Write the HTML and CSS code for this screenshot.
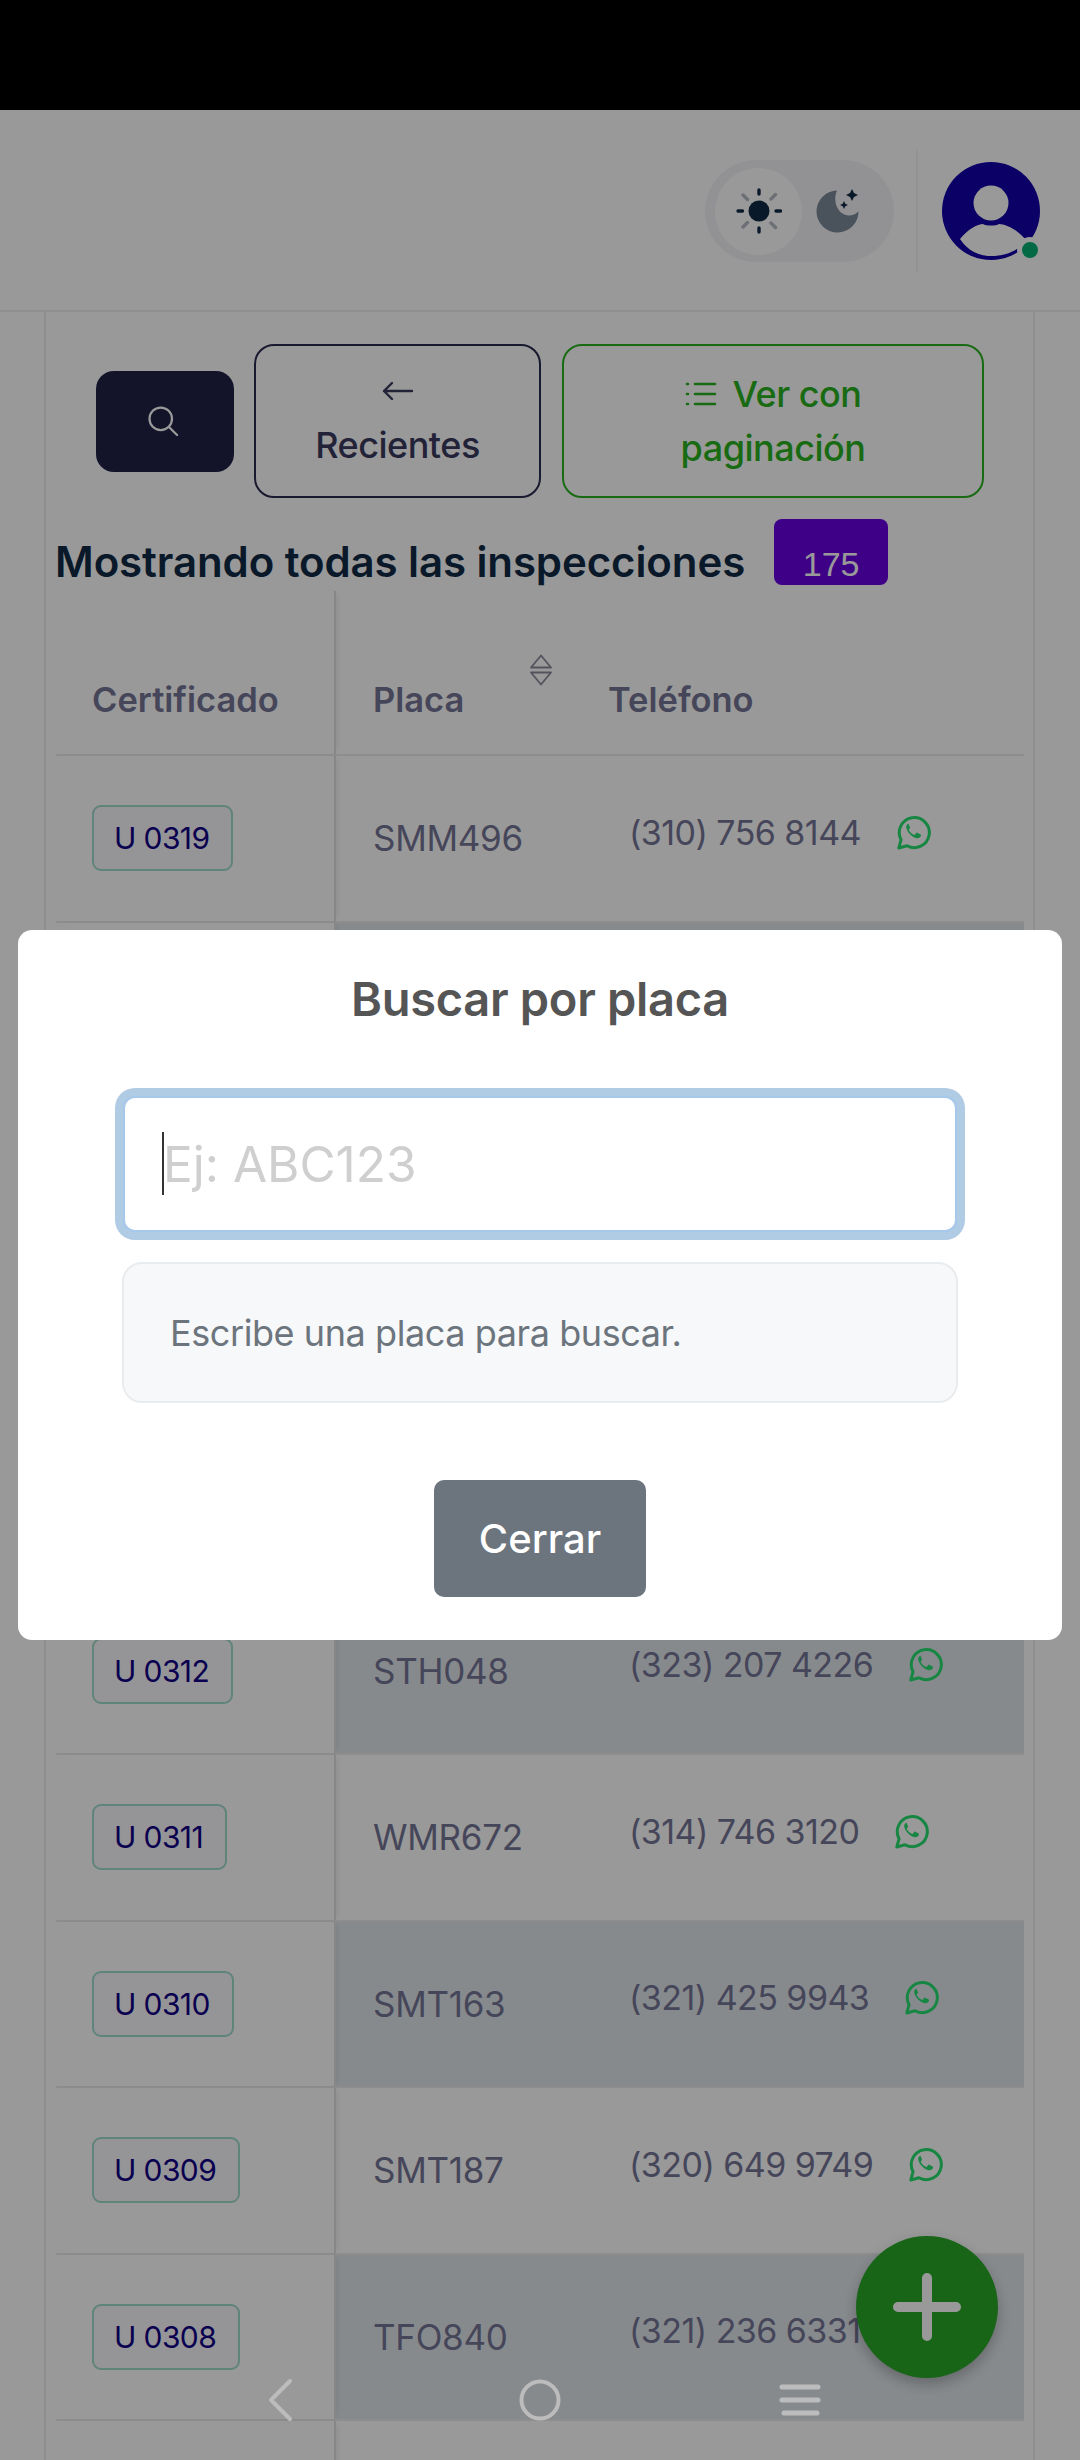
FILE: index.html
```html
<!DOCTYPE html>
<html lang="es">
<head>
<meta charset="utf-8">
<title>Inspecciones</title>
<link rel="stylesheet" href="styles.css">
</head>
<body>
<div class="page">
  <div class="statusbar"></div>
  <header class="topbar">
    <div class="toggle">
      <span class="knob">
        <svg class="sun" viewBox="0 0 46 46" width="46" height="46">
          <circle cx="23" cy="23" r="10.5" fill="#122b46"/>
          <g stroke="#122b46" stroke-width="3.4" stroke-linecap="round">
            <path d="M23 2v4M23 40v4M2 23h4.500M40 23h4.500"/>
          </g>
          <g stroke="#b4bac2" stroke-width="3.4" stroke-linecap="round">
            <path d="M7 7l4.500 4.500M35 35l4.500 4.500M7 39l4.500-4.500M35 11l4.500-4.500"/>
          </g>
        </svg>
      </span>
      <svg class="moon" viewBox="0 0 46 46" width="46" height="46">
        <path d="M22 2.500A21 21 0 1 0 43.500 23.500C38 29 31 28.500 26 24.500 20.500 19.500 18.500 10.500 22 2.500z" fill="#7c8999"/>
        <path d="M37 1l2 4 4 2-4 2-2 4-2-4-4-2 4-2zM29 13l1.300 2.700 2.700 1.300-2.700 1.300-1.300 2.700-1.300-2.700-2.700-1.300 2.700-1.300z" fill="#122b46"/>
      </svg>
    </div>
    <div class="divider"></div>
    <div class="avatar">
      <svg viewBox="0 0 98 98" width="98" height="98">
        <circle cx="49" cy="49" r="49" fill="#1100a8"/>
        <circle cx="49" cy="41" r="17.500" fill="#fff"/>
        <path d="M18 77C26 67 36 62 41 62c3 2 13 2 16 0 7 0 19 6 27 16C76 90 62 94 49 94 37 94 26 89 18 77z" fill="#fff"/>
      </svg>
      <span class="online"></span>
    </div>
  </header>

  <main class="card">
    <div class="actions">
      <button class="btn-search" type="button">
        <svg viewBox="0 0 32 32" width="36" height="36" fill="none" stroke="#fff" stroke-width="2" stroke-linecap="round"><circle cx="14" cy="14" r="10"/><path d="M21.500 21.500l7 7"/></svg>
      </button>
      <button class="btn-outline btn-dark" type="button">
        <svg viewBox="0 0 32 22" width="32" height="22" fill="none" stroke="currentColor" stroke-width="2.400" stroke-linecap="round" stroke-linejoin="round"><path d="M2 11h28M10 3l-8 8 8 8"/></svg>
        <span>Recientes</span>
      </button>
      <button class="btn-outline btn-green" type="button">
        <span class="btn-line">
          <svg viewBox="0 0 32 28" width="32" height="28" fill="none" stroke="currentColor" stroke-width="2.600" stroke-linecap="round"><path d="M10 4h20M10 14h20M10 24h20M2 4h1M2 14h1M2 24h1"/></svg>
          Ver con
        </span>
        <span>paginación</span>
      </button>
    </div>

    <div class="title-row">
      <h1 class="title">Mostrando todas las inspecciones</h1>
      <span class="count">175</span>
    </div>

    <section class="table">
      <div class="row row-head">
        <div class="cell cell-fixed">Certificado</div>
        <div class="cell cell-plate cell-sort">
          Placa
          <svg class="sort" viewBox="0 0 24 32" width="24" height="32" fill="none" stroke="#8a8a9c" stroke-width="1.800" stroke-linejoin="round"><path d="M12 1.500l10 12H2zM12 30.500l10-12H2z"/></svg>
        </div>
        <div class="cell">Teléfono</div>
      </div>

      <div class="row">
        <div class="cell cell-fixed"><span class="cert">U 0319</span></div>
        <div class="cell cell-plate">SMM496</div>
        <div class="cell cell-phone"><span class="phone">(310) 756 8144<svg class="wa"><use href="#wa"/></svg></span></div>
      </div>
      <div class="row row-alt"><div class="cell cell-fixed"></div><div class="cell cell-plate"></div><div class="cell"></div></div>
      <div class="row"><div class="cell cell-fixed"></div><div class="cell cell-plate"></div><div class="cell"></div></div>
      <div class="row row-alt"><div class="cell cell-fixed"></div><div class="cell cell-plate"></div><div class="cell"></div></div>
      <div class="row"><div class="cell cell-fixed"></div><div class="cell cell-plate"></div><div class="cell"></div></div>

      <div class="row row-alt">
        <div class="cell cell-fixed"><span class="cert">U 0312</span></div>
        <div class="cell cell-plate">STH048</div>
        <div class="cell cell-phone"><span class="phone">(323) 207 4226<svg class="wa"><use href="#wa"/></svg></span></div>
      </div>
      <div class="row">
        <div class="cell cell-fixed"><span class="cert">U 0311</span></div>
        <div class="cell cell-plate">WMR672</div>
        <div class="cell cell-phone"><span class="phone">(314) 746 3120<svg class="wa"><use href="#wa"/></svg></span></div>
      </div>
      <div class="row row-alt">
        <div class="cell cell-fixed"><span class="cert">U 0310</span></div>
        <div class="cell cell-plate">SMT163</div>
        <div class="cell cell-phone"><span class="phone">(321) 425 9943<svg class="wa"><use href="#wa"/></svg></span></div>
      </div>
      <div class="row">
        <div class="cell cell-fixed"><span class="cert">U 0309</span></div>
        <div class="cell cell-plate">SMT187</div>
        <div class="cell cell-phone"><span class="phone">(320) 649 9749<svg class="wa"><use href="#wa"/></svg></span></div>
      </div>
      <div class="row row-alt">
        <div class="cell cell-fixed"><span class="cert">U 0308</span></div>
        <div class="cell cell-plate">TFO840</div>
        <div class="cell cell-phone"><span class="phone">(321) 236 6331<svg class="wa"><use href="#wa"/></svg></span></div>
      </div>
      <div class="row"><div class="cell cell-fixed"></div><div class="cell cell-plate"></div><div class="cell"></div></div>
    </section>
  </main>

  <button class="fab" type="button">
    <svg viewBox="0 0 68 68" width="68" height="68" stroke="#fff" stroke-width="10" stroke-linecap="round"><path d="M34 5v58M5 34h58"/></svg>
  </button>

  <div class="backdrop"></div>

  <div class="modal">
    <h2 class="modal-title">Buscar por placa</h2>
    <div class="field">
      <input class="plate-input" type="text" placeholder="Ej: ABC123">
      <span class="caret"></span>
    </div>
    <div class="hint">Escribe una placa para buscar.</div>
    <button class="btn-close" type="button">Cerrar</button>
  </div>

  <nav class="navbar">
    <svg viewBox="0 0 26 44" width="26" height="44" fill="none" stroke="#bcbcbc" stroke-width="4" stroke-linecap="round" stroke-linejoin="round"><path d="M23 3L4 22l19 19"/></svg>
    <svg viewBox="0 0 42 42" width="42" height="42" fill="none" stroke="#bcbcbc" stroke-width="4"><circle cx="21" cy="21" r="18.500"/></svg>
    <svg viewBox="0 0 42 32" width="42" height="32" fill="none" stroke="#bcbcbc" stroke-width="5" stroke-linecap="round"><path d="M3 3h36M3 16h36M5 29h33"/></svg>
  </nav>
</div>

<svg class="defs" aria-hidden="true">
  <symbol id="wa" viewBox="0 0 34 35">
    <path fill="none" stroke="currentColor" stroke-width="3" d="M1.800 33l2.300-8.300A15 15 0 1 1 10 30.700z" stroke-linejoin="round"/>
    <path fill="currentColor" d="M11.800 8.500c-.8 0-2.600 1.400-2.600 3.600 0 2.300 1.600 4.600 2.900 6.200 1.500 1.900 4.300 4.300 7.500 4.900 2.200.4 4-.9 4.300-2.400.2-.8.100-1.200-.2-1.400l-3.500-1.700c-.4-.2-.7 0-1 .3l-1.400 1.700c-.3.300-.6.300-1 .1-1.900-.8-3.900-2.700-5-4.500-.2-.4-.1-.7.100-.9l1-1.300c.2-.3.200-.6.100-.9l-1.400-3.200c-.2-.4-.5-.5-.8-.5z"/>
  </symbol>
</svg>
</body>
</html>
```

FILE: styles.css
```css
* { box-sizing: border-box; }

html, body {
  margin: 0;
  height: 2460px;
  overflow: hidden;
  background: #fff;
}

body {
  font-family: Inter, "Liberation Sans", sans-serif;
  color: #757596;
}

button { font-family: inherit; }

.defs { width: 0; height: 0; position: absolute; }

.page {
  position: relative;
  width: 1080px;
  height: 2460px;
  overflow: hidden;
  background: #fff;
}

.statusbar {
  height: 110px;
  background: #000;
  position: relative;
  z-index: 5;
}

.topbar {
  height: 202px;
  display: flex;
  align-items: center;
  justify-content: flex-end;
  padding: 2px 40px 0 0;
  border-bottom: 2px solid #f0f0f0;
}

.toggle {
  width: 189px;
  height: 102px;
  border-radius: 51px;
  background: #f3f3f8;
  display: flex;
  align-items: center;
  padding-left: 10px;
  gap: 13px;
  margin-right: 22px;
}

.knob {
  width: 87px;
  height: 87px;
  border-radius: 50%;
  background: #fff;
  display: flex;
  align-items: center;
  justify-content: center;
}

.divider {
  width: 2px;
  height: 122px;
  background: #f5f5f8;
  margin-right: 24px;
}

.avatar {
  position: relative;
  width: 98px;
  height: 98px;
}

.avatar svg { display: block; }

.online {
  position: absolute;
  left: 75px;
  top: 75px;
  width: 26px;
  height: 26px;
  border-radius: 50%;
  background: #08b173;
  border: 5px solid #fff;
}

.card {
  margin: 0 45px 0 44px;
  padding: 32px 10px 0;
  border: 2px solid #eee;
  border-top: 0;
  border-radius: 0 0 20px 20px;
  position: relative;
}

.actions {
  display: flex;
  align-items: center;
  gap: 20px;
  padding-left: 40px;
}

.btn-search {
  width: 138px;
  height: 101px;
  border: 0;
  padding: 0 4px 0 0;
  border-radius: 18px;
  background: #212146;
  display: flex;
  align-items: center;
  justify-content: center;
  flex: none;
}

.btn-outline {
  height: 154px;
  border-radius: 20px;
  background: transparent;
  border: 2px solid;
  display: flex;
  flex-direction: column;
  align-items: center;
  justify-content: center;
  font-size: 36px;
  font-weight: 500;
  line-height: 44px;
  letter-spacing: -0.5px;
  flex: none;
}

.btn-dark {
  width: 287px;
  gap: 21px;
  padding-top: 6px;
  border-color: #2a2a50;
  color: #3a3a5e;
}

.btn-green {
  width: 422px;
  gap: 10px;
  margin-left: 1px;
  border-color: #2bb221;
  color: #2bb221;
}

.btn-line {
  display: flex;
  align-items: center;
  gap: 16px;
}

.title-row {
  display: flex;
  align-items: flex-end;
  gap: 29px;
  margin-top: 21px;
}

.title {
  margin: 0 0 -3px -1px;
  font-size: 42px;
  font-weight: 600;
  line-height: 52px;
  color: #122b46;
  letter-spacing: -0.1px;
  white-space: nowrap;
}

.count {
  width: 114px;
  height: 66px;
  border-radius: 8px;
  background: #6900e3;
  color: #fff;
  font-family: "Liberation Sans", sans-serif;
  font-size: 34px;
  display: flex;
  align-items: flex-end;
  justify-content: center;
  padding-bottom: 1px;
  flex: none;
}

.table {
  margin: 6px 0 0 0;
  width: 968px;
}

.row {
  display: grid;
  grid-template-columns: 280px 272px 416px;
  height: 166.5px;
  border-bottom: 2px solid #ebebeb;
  font-size: 35px;
  letter-spacing: -0.3px;
}

.row-head {
  height: 165px;
  font-size: 34.5px;
  font-weight: 600;
  letter-spacing: 0;
}

.row-alt .cell:not(.cell-fixed) { background: #e2e7ec; }

.cell {
  display: flex;
  align-items: center;
}

.row-head .cell {
  align-items: flex-end;
  padding-bottom: 34px;
}

.cell-fixed {
  padding-left: 36px;
  border-right: 2px solid #e2e2e2;
  box-shadow: 4px 0 6px -3px rgba(0, 0, 0, 0.08);
  position: relative;
  background: #fff;
}

.cell-plate { padding-left: 37px; }

.sort {
  margin-left: 65px;
  margin-bottom: 34px;
}

.cell-phone { padding-left: 21px; }

.phone {
  display: flex;
  align-items: center;
  margin-top: -12px;
  white-space: nowrap;
  font-size: 34px;
  letter-spacing: -0.55px;
}

.wa {
  width: 34px;
  height: 35px;
  margin-left: 36px;
  color: #27e070;
  flex: none;
}

.cert {
  display: inline-flex;
  align-items: center;
  height: 66px;
  padding: 0 22px 0 20px;
  border: 2px solid #9fdccb;
  border-radius: 9px;
  background: #f9f7fc;
  color: #110085;
  font-size: 30px;
  font-weight: 400;
  letter-spacing: -0.6px;
}

.fab {
  position: absolute;
  left: 856px;
  top: 2236px;
  width: 142px;
  height: 142px;
  border: 0;
  border-radius: 50%;
  background: #28a828;
  box-shadow: 0 6px 14px rgba(0, 0, 0, 0.25);
  display: flex;
  align-items: center;
  justify-content: center;
}

.backdrop {
  position: absolute;
  inset: 0;
  background: rgba(0, 0, 0, 0.4);
}

.modal {
  position: absolute;
  left: 18px;
  top: 930px;
  width: 1044px;
  height: 710px;
  background: #fff;
  border-radius: 14px;
  display: flex;
  flex-direction: column;
  align-items: center;
  padding: 39px 104px 0;
}

.modal-title {
  margin: 0;
  font-size: 47px;
  font-weight: 600;
  line-height: 60px;
  color: #555;
  letter-spacing: -0.3px;
}

.field {
  position: relative;
  width: 834px;
  margin-top: 67px;
}

.plate-input {
  display: block;
  width: 100%;
  height: 136px;
  padding: 0 38px;
  border: 2px solid #a6c8ea;
  border-radius: 12px;
  outline: 0;
  box-shadow: 0 0 0 8px #b0cbe4;
  background: #fff;
  font-family: inherit;
  font-size: 49.5px;
}

.plate-input::placeholder {
  color: #cfcfcf;
  opacity: 1;
}

.caret {
  position: absolute;
  left: 39px;
  top: 36px;
  width: 2px;
  height: 63px;
  background: #333;
}

.hint {
  width: 836px;
  height: 141px;
  margin-top: 30px;
  padding-left: 46px;
  display: flex;
  align-items: center;
  background: #f7f8fa;
  border: 2px solid #e9ecef;
  border-radius: 20px;
  color: #6c757d;
  font-size: 36px;
  letter-spacing: -0.42px;
}

.btn-close {
  width: 212px;
  height: 117px;
  margin-top: 77px;
  border: 0;
  border-radius: 10px;
  background: #6c757d;
  color: #fff;
  font-size: 40px;
  font-weight: 500;
}

.navbar {
  position: absolute;
  left: 267px;
  top: 2378px;
  height: 44px;
  display: flex;
  align-items: center;
  gap: 226px;
}

.navbar svg:last-child { margin-left: -8px; }
```
